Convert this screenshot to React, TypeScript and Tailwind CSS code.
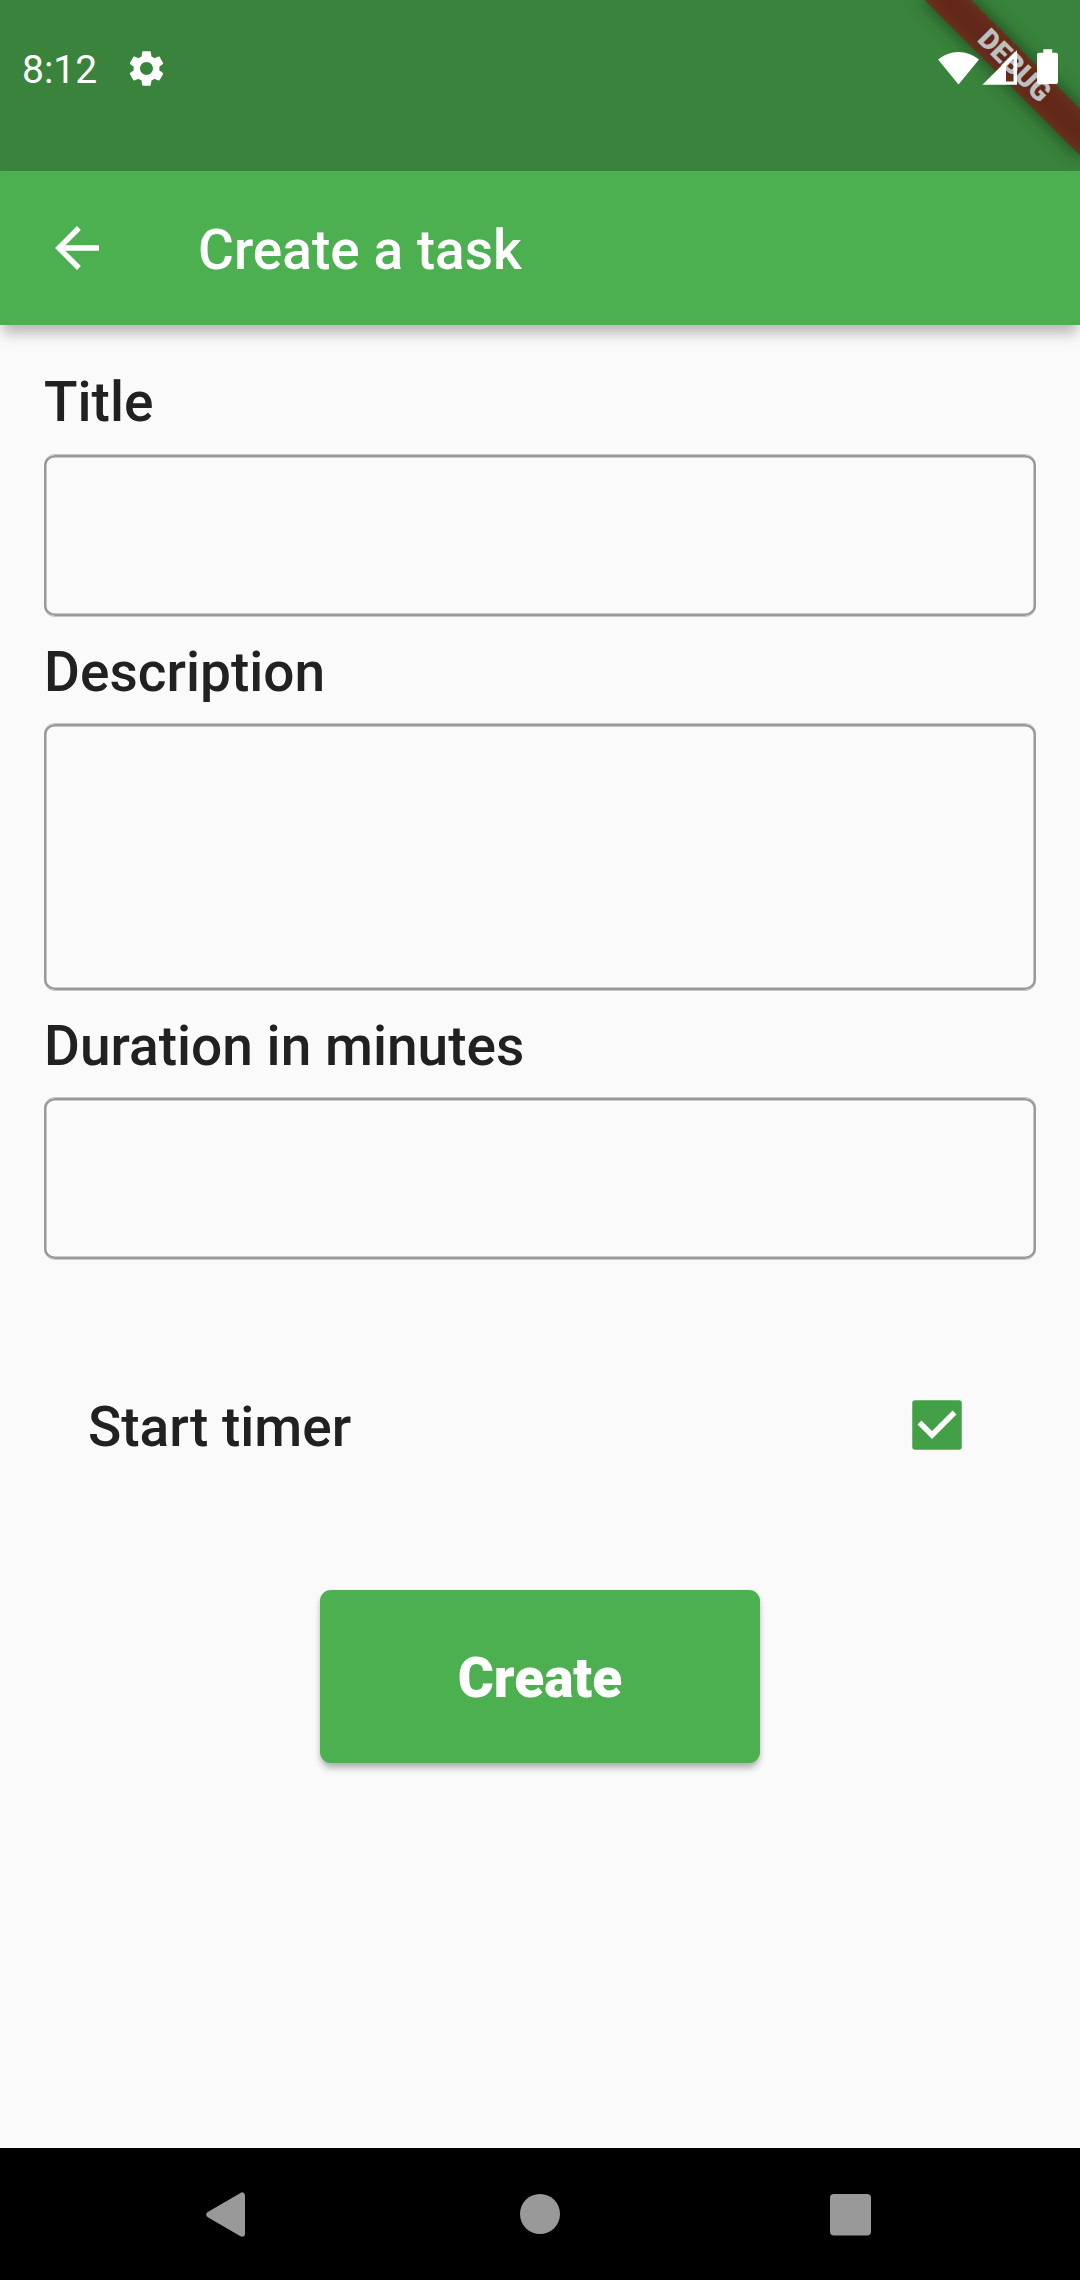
import React from "react";

function StatusIcons() {
  return (
    <svg className="absolute left-[930px] top-[40px]" width="140" height="55" viewBox="930 40 140 55" fill="#fff">
      <path d="M938 59.500A32 32 0 0 1 979 59.500L958.500 84.400Z" />
      <path fillRule="evenodd" d="M982.400 84.800L1017 50.300V84.800ZM1006 66V81.500H1013.500V58.500Z" />
      <path d="M1043.300 49.300h8.900v3.500h3.800a2 2 0 0 1 2 2V82a2 2 0 0 1-2 2h-17a2 2 0 0 1-2-2V54.800a2 2 0 0 1 2-2h4.300z" />
    </svg>
  );
}

function DebugBanner() {
  return (
    <div className="absolute left-[1080px] top-0 h-0 w-0 origin-top-left rotate-45">
      <div className="absolute -left-[110px] top-[77px] h-[33px] w-[220px] bg-black/50 blur-[9.500px]" />
      <div className="absolute -left-[110px] top-[77px] flex h-[33px] w-[220px] items-center justify-center bg-[#b71c1c]/63 text-[28.050px] leading-none font-black text-white">
        DEBUG
      </div>
    </div>
  );
}

function StatusBar() {
  return (
    <div className="relative h-[171px] shrink-0 overflow-hidden bg-[#4caf50]">
      <DebugBanner />
      <div className="absolute inset-0 bg-black/25" />
      <div className="relative flex items-center pt-[43px] pl-[22px] text-white">
        <span className="text-[39px] leading-[54px]">8:12</span>
        <svg className="-mt-[4px] ml-[28px]" width="43" height="43" viewBox="0 0 24 24" fill="#fff">
          <path d="M19.140 12.940c.04-.3.06-.61.06-.94 0-.32-.02-.64-.07-.94l2.030-1.580c.18-.14.23-.41.12-.61l-1.920-3.320c-.12-.22-.37-.29-.59-.22l-2.390.96c-.5-.38-1.030-.7-1.620-.94l-.36-2.540c-.04-.24-.24-.41-.48-.41h-3.840c-.24 0-.43.17-.47.41l-.36 2.540c-.59.24-1.130.57-1.620.94l-2.390-.96c-.22-.08-.47 0-.59.22L2.740 8.870c-.12.21-.08.47.12.61l2.030 1.580c-.05.3-.09.63-.09.94s.02.64.07.94l-2.030 1.580c-.18.14-.23.41-.12.61l1.920 3.320c.12.22.37.29.59.22l2.390-.96c.5.38 1.030.7 1.620.94l.36 2.540c.05.24.24.41.48.41h3.840c.24 0 .44-.17.47-.41l.36-2.540c.59-.24 1.130-.56 1.620-.94l2.390.96c.22.08.47 0 .59-.22l1.920-3.320c.12-.22.07-.47-.12-.61l-2.010-1.580zM12 15.600c-1.980 0-3.600-1.620-3.600-3.600s1.620-3.600 3.600-3.600 3.600 1.620 3.600 3.600-1.620 3.600-3.600 3.600z" />
        </svg>
      </div>
      <StatusIcons />
    </div>
  );
}

function Field({ label, labelHeight, box }: { label: string; labelHeight: string; box: string }) {
  return (
    <label className="block">
      <span className={`block pt-[23px] text-[55px] leading-[64px] font-medium tracking-[0.020px] ${labelHeight}`}>{label}</span>
      <input
        className={`block w-full rounded-[11px] border-y border-[#c8c8c8] bg-transparent px-8 shadow-[inset_0_0_0_2.500px_#999999] outline-none ${box}`}
      />
    </label>
  );
}

export default function App() {
  return (
    <div className="flex h-[2280px] w-[1080px] flex-col overflow-hidden bg-[#fafafa] font-['Roboto',sans-serif] text-[#212121]">
      <StatusBar />
      <header className="relative flex h-[154px] shrink-0 items-center bg-[#4caf50] pl-[44px] text-white shadow-[0_11px_13px_-3px_rgba(0,0,0,0.28)]">
        <svg width="66" height="66" viewBox="0 0 24 24" fill="currentColor">
          <path d="M20 11H7.830l5.590-5.590L12 4l-8 8 8 8 1.410-1.410L7.830 13H20v-2z" />
        </svg>
        <h1 className="ml-[88px] pt-[4px] text-[55px] leading-[64px] font-medium">Create a task</h1>
      </header>
      <main className="flex-1 px-[44px] pt-[22px]">
        <Field label="Title" labelHeight="h-[107px]" box="h-[163px]" />
        <Field label="Description" labelHeight="h-[106px]" box="h-[268px]" />
        <Field label="Duration in minutes" labelHeight="h-[106px]" box="h-[163px]" />
        <div className="mt-[115px] flex h-[104px] items-center justify-between pr-[74px] pl-[44px]">
          <span className="text-[55px] leading-[64px] font-medium">Start timer</span>
          <svg className="mb-[4px]" width="50" height="50" viewBox="0 0 50 50">
            <rect x="0.250" y="0.250" width="49.500" height="49.500" rx="2.750" fill="#43a047" />
            <path d="M7.500 22.500L20 35L42.500 12.500" fill="none" stroke="#fff" strokeWidth="5.500" />
          </svg>
        </div>
        <button className="mx-auto mt-[111px] block h-[173px] w-[440px] rounded-[11px] bg-[#4caf50] pt-[4px] text-[55px] font-black text-white shadow-[0_6px_7px_-1px_rgba(0,0,0,0.28),0_1px_5px_rgba(0,0,0,0.08)]">
          Create
        </button>
      </main>
      <nav className="flex h-[132px] shrink-0 items-center bg-black pl-[206px]">
        <svg width="666" height="46" viewBox="206 2191 666 46" fill="#999">
          <path d="M209.300 2214.600L242 2195.500V2233.700Z" stroke="#999" strokeWidth="6" strokeLinejoin="round" />
          <circle cx="540" cy="2214" r="20" />
          <rect x="830" y="2194" width="41" height="41.500" rx="4" />
        </svg>
      </nav>
    </div>
  );
}
